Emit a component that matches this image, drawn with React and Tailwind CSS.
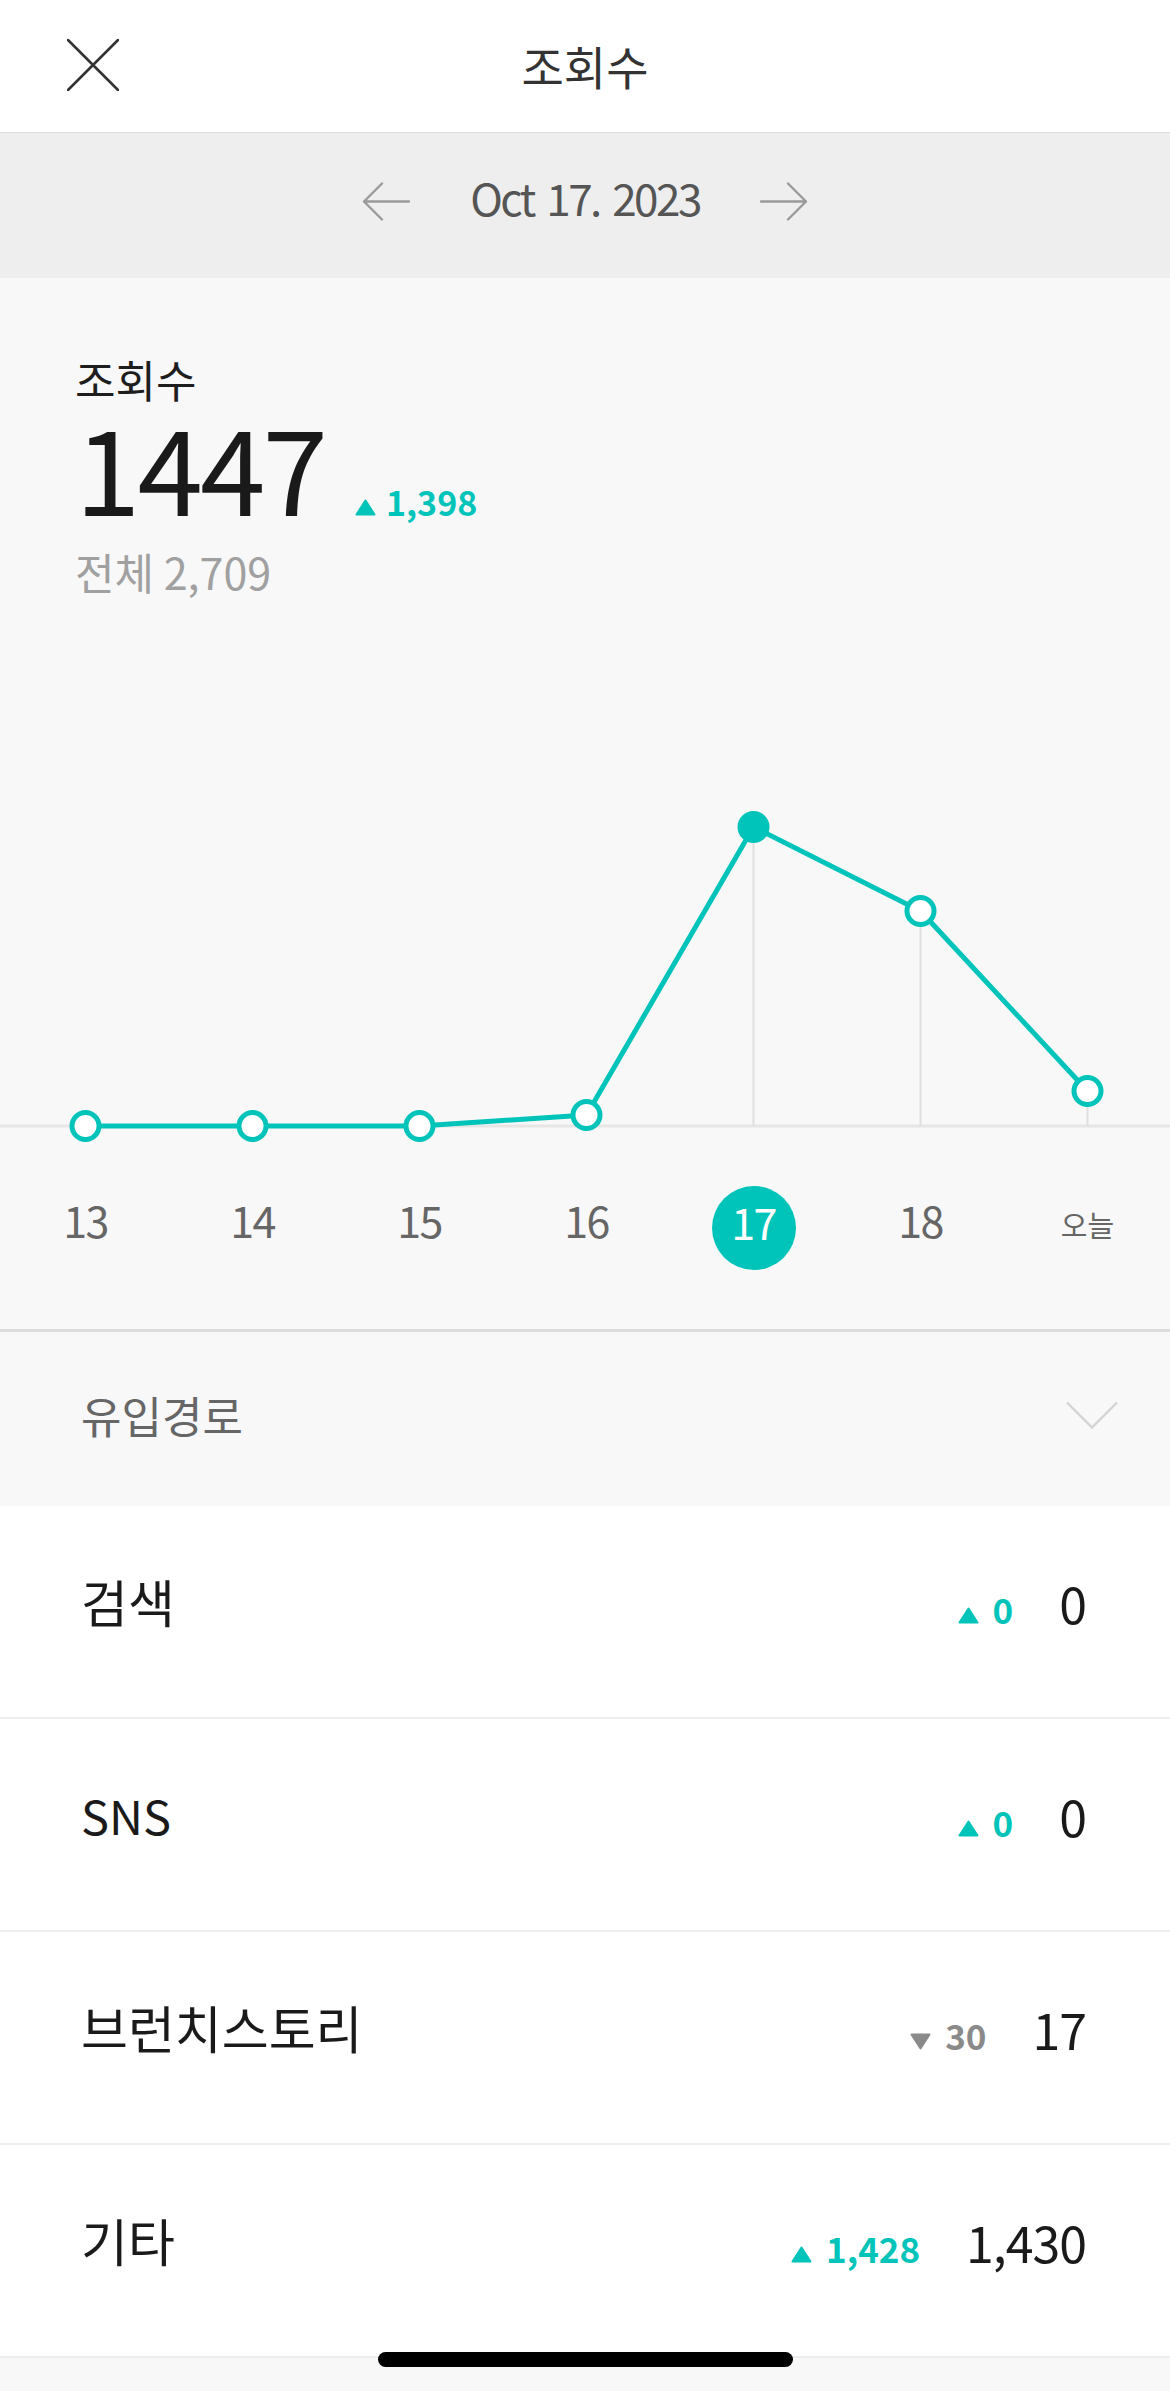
import React from "react";

const pts = [
  [85.5, 506],
  [252.5, 506],
  [419.5, 506],
  [586.5, 495],
  [753.5, 207],
  [920.5, 291],
  [1087.5, 471],
];

const labels = ["13", "14", "15", "16", "17", "18", "오늘"];

const rows = [
  { label: "검색", latin: false, delta: "0", up: true, value: "0" },
  { label: "SNS", latin: true, delta: "0", up: true, value: "0" },
  { label: "브런치스토리", latin: false, delta: "30", up: false, value: "17" },
  { label: "기타", latin: false, delta: "1,428", up: true, value: "1,430" },
];

function Tri({ up, className }) {
  return (
    <svg width="21" height="17" viewBox="0 0 21 17" className={className}>
      {up ? (
        <path d="M10.5 1.5 L19.5 15.5 L1.5 15.5 Z" fill="currentColor" stroke="currentColor" strokeWidth="2" strokeLinejoin="round" />
      ) : (
        <path d="M1.5 1.5 L19.5 1.5 L10.5 15.5 Z" fill="currentColor" stroke="currentColor" strokeWidth="2" strokeLinejoin="round" />
      )}
    </svg>
  );
}

export default function App() {
  return (
    <div className="relative w-[1170px] min-h-[2391px] bg-[#f8f8f8] font-['Noto_Sans_CJK_KR','Noto_Sans',sans-serif]">
      {/* Header */}
      <header className="h-[133px] bg-white border-b border-[#dddddd] grid grid-cols-[1fr_auto_1fr] items-center pb-[3px]">
        <div className="pl-[67px] flex items-center">
          <svg width="52" height="52" viewBox="0 0 52 52">
            <path d="M1 1 L51 51 M51 1 L1 51" stroke="#333333" strokeWidth="2.6" strokeLinecap="round" />
          </svg>
        </div>
        <div className="text-[46px] leading-none text-[#333333]">조회수</div>
        <div />
      </header>

      {/* Date band */}
      <div className="h-[145px] bg-[#eeeeee] flex items-center justify-center">
        <svg width="48" height="39" viewBox="0 0 48 39" className="mb-[8px] mr-[60px]">
          <path d="M47 19.5 L2 19.5 M20 1.5 L2 19.5 L20 37.5" stroke="#9a9a9a" strokeWidth="2.4" fill="none" strokeLinecap="round" strokeLinejoin="round" />
        </svg>
        <span className="text-[44px] leading-none tracking-[-2.5px] [word-spacing:5px] text-[#555555] pb-[18px]">Oct 17. 2023</span>
        <svg width="48" height="39" viewBox="0 0 48 39" className="mb-[8px] ml-[60px]">
          <path d="M1 19.5 L46 19.5 M28 1.5 L46 19.5 L28 37.5" stroke="#9a9a9a" strokeWidth="2.4" fill="none" strokeLinecap="round" strokeLinejoin="round" />
        </svg>
      </div>

      {/* Stats */}
      <section className="bg-[#f8f8f8] pt-[79px] pb-[59px] border-b-[3px] border-[#dcdcdc]">
        <div className="pl-[75px]">
          <div className="text-[44px] leading-none text-[#1e1e1e]">조회수</div>
          <div className="mt-[9px] flex items-baseline">
            <span className="text-[118px] leading-[110px] tracking-[-3px] text-[#1a1a1a]">1447</span>
            <span className="ml-[30px] flex items-baseline text-[#00c4b9]">
              <Tri up className="mr-[10px]" />
              <span className="text-[34px] leading-none font-semibold">1,398</span>
            </span>
          </div>
          <div className="mt-[30px] text-[43px] leading-none text-[#a0a0a0]">전체 2,709</div>
        </div>

        <svg width="1170" height="566" viewBox="0 0 1170 566" className="block mt-[27px]">
          <line x1="0" y1="506" x2="1170" y2="506" stroke="#e6e6e6" strokeWidth="3" />
          {pts.slice(3).map(([x, y], i) => (
            <line key={i} x1={x} y1={y} x2={x} y2="506" stroke="#e0e0e0" strokeWidth="2" />
          ))}
          <polyline
            points={pts.map((p) => p.join(",")).join(" ")}
            fill="none"
            stroke="#00c4b9"
            strokeWidth="5"
            strokeLinejoin="round"
          />
          {pts.map(([x, y], i) => (
            <circle
              key={i}
              cx={x}
              cy={y}
              r="13.5"
              fill={i === 4 ? "#00c4b9" : "#ffffff"}
              stroke="#00c4b9"
              strokeWidth="5"
            />
          ))}
        </svg>

        <div className="grid grid-cols-[repeat(7,167px)] pl-[2px] h-[84px]">
          {labels.map((l, i) => (
            <div key={l} className="flex items-center justify-center">
              {i === 4 ? (
                <div className="w-[84px] h-[84px] rounded-full bg-[#00c4b9] flex items-center justify-center">
                  <span className="text-[43px] leading-none text-white pb-[14px] tracking-[-1.5px]">{l}</span>
                </div>
              ) : i === 6 ? (
                <span className="text-[29px] leading-none text-[#666666] pb-[8px]">{l}</span>
              ) : (
                <span className="text-[43px] leading-none text-[#666666] pb-[18px] tracking-[-1.5px]">{l}</span>
              )}
            </div>
          ))}
        </div>
      </section>

      {/* 유입경로 */}
      <div className="h-[174px] bg-[#f8f8f8] flex items-center justify-between pl-[81px] pr-[52px] pb-[8px]">
        <span className="text-[44px] leading-none text-[#666666]">유입경로</span>
        <svg width="52" height="28" viewBox="0 0 52 28">
          <path d="M1 1.5 L26 26.5 L51 1.5" stroke="#d4d4d4" strokeWidth="2.4" fill="none" />
        </svg>
      </div>

      {/* Rows */}
      <div className="bg-white">
        {rows.map((r) => (
          <div key={r.label} className="h-[213px] border-b-2 border-[#eeeeee] flex items-center justify-between pl-[81px] pr-[84px] pb-[20px]">
            <span className={r.latin ? "text-[47px] leading-none text-[#1a1a1a]" : "text-[51px] leading-none text-[#1a1a1a]"}>{r.label}</span>
            <div className="flex items-baseline">
              <span className={r.up ? "flex items-baseline text-[#00c4b9]" : "flex items-baseline text-[#8a8a8a]"}>
                <Tri up={r.up} className="mr-[14px]" />
                <span className="text-[35px] leading-none font-semibold">{r.delta}</span>
              </span>
              <span className="ml-[46px] text-[50px] leading-none tracking-[-1px] text-[#1a1a1a]">{r.value}</span>
            </div>
          </div>
        ))}
      </div>

      {/* Home indicator */}
      <div className="absolute left-[378px] top-[2352px] w-[415px] h-[15px] rounded-full bg-black" />
    </div>
  );
}
